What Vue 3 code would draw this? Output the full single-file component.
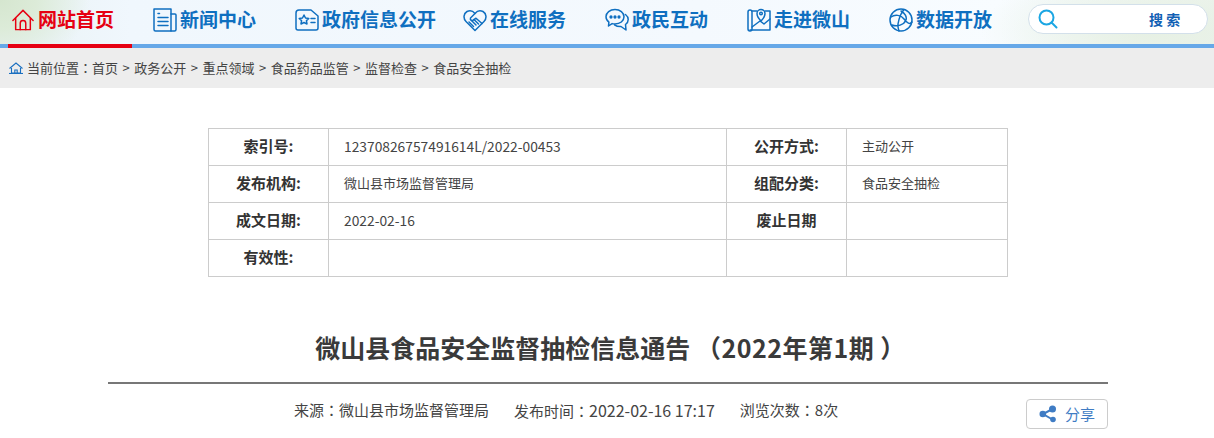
<script setup>
const nav = [
  { t: '新闻中心', i: 'news' },
  { t: '政府信息公开', i: 'gov' },
  { t: '在线服务', i: 'hands' },
  { t: '政民互动', i: 'chat' },
  { t: '走进微山', i: 'map' },
  { t: '数据开放', i: 'globe' },
]
const crumbs = ['首页', '政务公开', '重点领域', '食品药品监管', '监督检查', '食品安全抽检']
const rows = [
  ['索引号:', '12370826757491614L/2022-00453', '公开方式:', '主动公开'],
  ['发布机构:', '微山县市场监督管理局', '组配分类:', '食品安全抽检'],
  ['成文日期:', '2022-02-16', '废止日期', ''],
  ['有效性:', '', '', ''],
]
const isNum = (s) => /^\d/.test(s)
</script>

<template>
  <div class="page">
    <header class="top">
      <nav class="nav">
        <a class="item home">
          <svg class="ico homeico" viewBox="0 0 24 24" fill="none" stroke="#e60012" stroke-width="1.6" stroke-linejoin="round" stroke-linecap="round">
            <path d="M1 12.500 12 1.500l11 11" />
            <path d="M4 10v12.500h16V10" />
            <path d="M9 22.500V15.500a3 3 0 0 1 6 0v7" />
          </svg>
          <span>网站首页</span>
        </a>
        <a v-for="n in nav" :key="n.t" class="item" :class="n.i">
          <svg class="ico" viewBox="0 0 24 24" fill="none" stroke="#0f6fc0" stroke-width="1.5" stroke-linejoin="round" stroke-linecap="round">
            <template v-if="n.i === 'news'">
              <path d="M1 1h17v22H2.500A1.500 1.500 0 0 1 1 21.500z" />
              <path d="M18 6h4a1 1 0 0 1 1 1v14.500a1.500 1.500 0 0 1-1.500 1.500H18" />
              <path d="M5 5.500h1.500M5 9.500h10M5 13.500h10M5 17.500h10" />
            </template>
            <template v-else-if="n.i === 'gov'">
              <path d="M4 2h12l7 6v12a2 2 0 0 1-2 2H3a2 2 0 0 1-2-2V5a3 3 0 0 1 3-3z" />
              <path d="m9 7 1.500 3 3.300.4-2.400 2.300.6 3.300L9 14.500 6 16l.6-3.300-2.400-2.300 3.300-.4z" />
              <path d="M16 10.500h4M16 14.500h4" />
            </template>
            <template v-else-if="n.i === 'hands'">
              <path d="M12 22.500 3 13.500C0 10.500.5 5.500 4 3.500c3-1.500 6-.5 8 2 2-2.500 5-3.500 8-2 3.500 2 4 7 1 10z" />
              <path d="M12 5.500 7.500 10a1.800 1.800 0 0 0 2.700 2.200l2.800-2 6 5.300" />
              <path d="m6 14 4.500 4.500M8.500 12.500 13 17M11 11.500l4.500 4.500" />
            </template>
            <template v-else-if="n.i === 'chat'">
              <path d="M10 1.500c5 0 9 3 9 7.300s-4 7.200-9 7.200c-1 0-2-.1-2.900-.4L3.500 18l.4-3.800C2 12.800 1 11 1 8.800 1 4.500 5 1.500 10 1.500z" />
              <path d="M20.500 6.500c1.700 1.300 2.700 3 2.700 5 0 2.100-1 3.800-2.700 5l.5 5.500-5-3.500c-2.500.2-4.500-.3-6.500-1.700" />
              <circle cx="6" cy="9" r=".9" fill="#0f6fc0" />
              <circle cx="10" cy="9" r=".9" fill="#0f6fc0" />
              <circle cx="14" cy="9" r=".9" fill="#0f6fc0" />
            </template>
            <template v-else-if="n.i === 'map'">
              <path d="M1 4a2 2 0 0 1 4 0v17a2 2 0 1 1-4 0z" />
              <path d="M5 3h5M18 3h5v19H3" />
              <path d="M14 13s-4-4-4-7.500a4 4 0 0 1 8 0C18 9 14 13 14 13z" />
              <circle cx="14" cy="5.500" r="1.300" />
              <path d="m5 19 8-6 4 3 6-5" />
            </template>
            <template v-else>
              <circle cx="12" cy="12" r="11" />
              <path d="M2 9c4-3 10-2 13 2s6 6 8 3M15 1.500C12 5 10 10 9 16c-.300 2 0 4 1 7M3 17c5 2 12 0 14-5 1-3-1-7-5-9" />
            </template>
          </svg>
          <span>{{ n.t }}</span>
        </a>
      </nav>
      <div class="search">
        <svg class="sicon" viewBox="0 0 20 20" fill="none" stroke="#1ba6e3" stroke-width="2">
          <circle cx="8.500" cy="8.500" r="7" />
          <path d="m13.500 13.500 5 5" stroke-linecap="round" />
        </svg>
        <span class="stext">搜 索</span>
      </div>
    </header>
    <div class="bluebar"><i class="redbar"></i></div>

    <div class="crumb">
      <svg class="cico" viewBox="0 0 14 12" fill="none" stroke="#1a6fc0" stroke-width="1.100">
        <path d="M.5 6.500 7 1l6.500 5.500" />
        <path d="M2.500 6v5h9V6" />
        <path d="M5.800 11V8h2.400v3" />
        <path d="M0 11.500h14" />
      </svg>
      <span>当前位置<b class="colon">：</b></span>
      <template v-for="(c, i) in crumbs" :key="c">
        <span>{{ c }}</span><span v-if="i < crumbs.length - 1" class="sep">&gt;</span>
      </template>
    </div>

    <table class="meta">
      <colgroup>
        <col class="c1" /><col class="c2" /><col class="c3" /><col class="c4" />
      </colgroup>
      <tbody>
        <tr v-for="r in rows" :key="r[0]">
          <th>{{ r[0] }}</th>
          <td :class="{ num: isNum(r[1]) }">{{ r[1] }}</td>
          <th>{{ r[2] }}</th>
          <td>{{ r[3] }}</td>
        </tr>
      </tbody>
    </table>

    <h1 class="title">微山县食品安全监督抽检信息通告 <span class="tail">（2022年第1期 ）</span></h1>
    <div class="rule"></div>
    <div class="info">
      <span class="src">来源<b class="colon">：</b>微山县市场监督管理局</span>
      <span class="time">发布时间<b class="colon">：</b><span class="dig">2022-02-16 17:17</span></span>
      <span class="views">浏览次数<b class="colon">：</b>8次</span>
      <a class="share">
        <svg class="shico" viewBox="0 0 18 18" fill="#3f7cc4" stroke="#3f7cc4">
          <path d="M13.500 4 4 9l9.500 5.500" fill="none" stroke-width="2" />
          <circle cx="13.500" cy="4" r="3.500" stroke="none" />
          <circle cx="3.800" cy="9" r="3.300" stroke="none" />
          <circle cx="14" cy="14.500" r="2.800" stroke="none" />
        </svg>
        <span>分享</span>
      </a>
    </div>
  </div>
</template>

<style>
html, body { margin: 0; background: #fff; overflow: hidden; }
</style>

<style scoped>
.page {
  width: 1214px;
  height: 438px;
  overflow: hidden;
  font-family: "Noto Sans CJK SC", "Noto Sans", sans-serif;
  color: #333;
  font-size: 14px;
}
.top {
  position: relative;
  height: 44px;
  display: flex;
  background:
    radial-gradient(ellipse 90px 70px at 0 0, #d5e6cf 0%, #dcebd8 40%, rgba(230, 241, 235, 0) 100%),
    radial-gradient(ellipse 170px 60px at 1150px 30px, #e6f0e3 0%, rgba(235, 243, 238, 0) 100%),
    linear-gradient(90deg, #e8f2f4 0, #f0f7fd 130px, #f4f9fe 700px, #f8fcff 1000px, #edf4ee 1214px);
}
.nav { display: flex; align-items: center; height: 40px; }
.item {
  display: flex;
  align-items: center;
  margin-left: 39px;
  font-size: 19px;
  font-weight: 700;
  color: #0f6fc0;
  white-space: nowrap;
}
.item span { margin-left: 3px; margin-bottom: 4px; }
.item.home { color: #e60012; margin-left: 12px; }
.home span { margin-left: 4px; }
.item.hands { margin-left: 27px; }
.ico { width: 24px; height: 24px; flex: none; }
.homeico { width: 22px; height: 24px; }
.search {
  position: absolute;
  left: 1028px;
  top: 4px;
  width: 180px;
  height: 30px;
  box-sizing: border-box;
  background: #fff;
  border: 1px solid #d3e0ea;
  border-radius: 15px;
  display: flex;
  align-items: center;
}
.sicon { width: 20px; height: 20px; margin-left: 9px; }
.stext {
  margin-left: 91px;
  font-size: 14px;
  font-weight: 700;
  color: #1260b4;
  white-space: pre;
}
.bluebar { height: 4px; background: #66a8e8; position: relative; }
.redbar { position: absolute; left: 8px; top: 0; width: 124px; height: 4px; background: #e60012; }
.crumb {
  height: 38px;
  padding: 0 0 2px 9px;
  background: #ededed;
  display: flex;
  align-items: center;
  font-size: 13px;
  color: #444;
  white-space: nowrap;
}
.colon { font-family: "Noto Sans CJK TC", sans-serif; font-weight: 400; }
.cico { width: 14px; height: 12px; margin-right: 4px; margin-top: 2px; }
.sep { margin: 0 4.500px; }
.meta {
  margin: 40px 0 0 208px;
  width: 799px;
  border-collapse: collapse;
  table-layout: fixed;
}
.c1 { width: 120px; }
.c2 { width: 398px; }
.c3 { width: 120px; }
.c4 { width: 161px; }
.meta th, .meta td {
  border: 1px solid #ccc;
  height: 34px;
  padding: 0 0 2px;
  line-height: 20px;
  box-sizing: content-box;
}
.meta th { font-size: 15px; font-weight: 700; text-align: center; color: #333; }
.meta td { padding-left: 15px; font-size: 13px; color: #444; }
.meta td.num { font-size: 13.800px; }
.title {
  margin: 50px 0 0;
  padding-left: 7px;
  text-align: center;
  font-size: 25px;
  line-height: 40px;
  font-weight: 700;
  color: #3a3a3a;
  white-space: nowrap;
}
.tail { letter-spacing: .5px; }
.rule { margin: 15px 0 0 108px; width: 1000px; height: 2px; background: #777; }
.info {
  position: relative;
  display: flex;
  margin-top: 15px;
  padding-left: 294px;
  font-size: 15px;
  line-height: 22px;
  color: #444;
  white-space: nowrap;
}
.dig { font-size: 16px; }
.time { margin-left: 25px; }
.views { margin-left: 25px; }
.share {
  position: absolute;
  left: 1026px;
  top: 0;
  width: 82px;
  height: 30px;
  box-sizing: border-box;
  border: 1px solid #ccc;
  border-radius: 4px;
  display: flex;
  align-items: center;
  color: #3f7cc4;
  font-size: 15px;
}
.shico { width: 18px; height: 18px; margin-left: 12px; margin-right: 8px; }
</style>
